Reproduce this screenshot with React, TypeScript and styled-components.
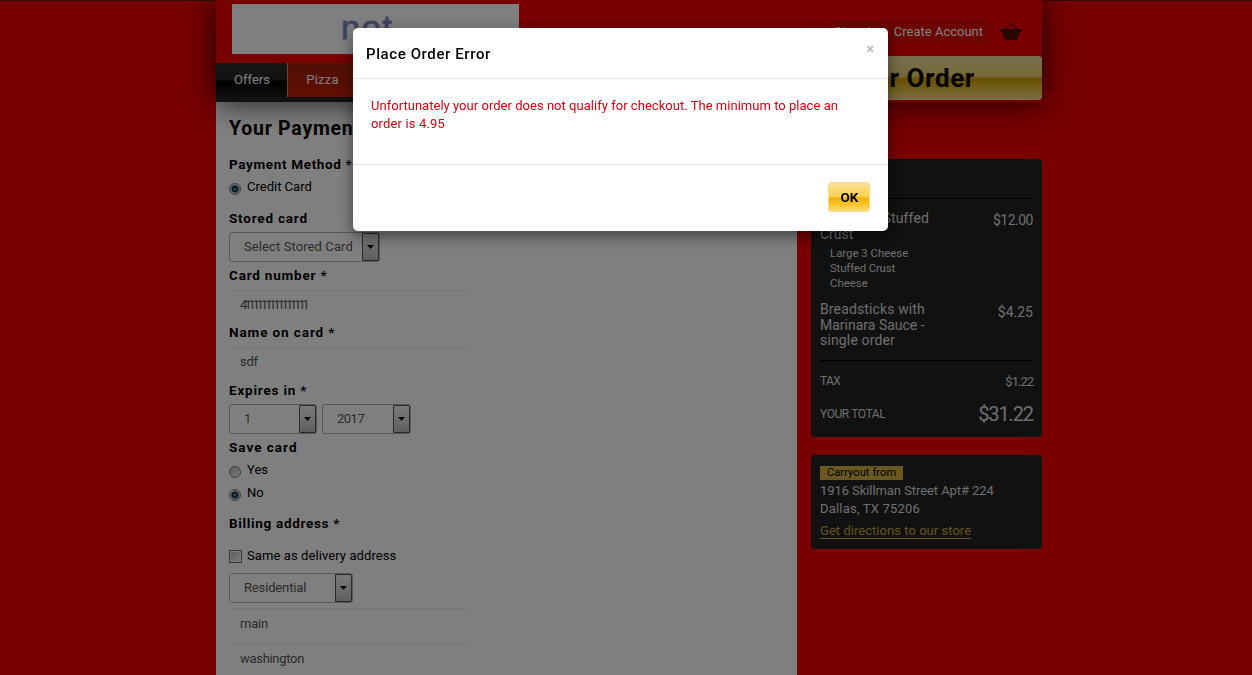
import React from "react";
import styled, { createGlobalStyle } from "styled-components";

const Global = createGlobalStyle`
  * { box-sizing: border-box; }
  html, body { margin: 0; height: 675px; overflow: hidden; background: #f00000; }
  body { font-family: Roboto, "Open Sans", sans-serif; font-size: 13px; color: #000; }
  h1, h2, p { margin: 0; }
`;

interface TextProps { $ls?: number; $size?: number }

const Text = styled.span<TextProps>`
  letter-spacing: ${(p) => p.$ls ?? 0}px;
  ${(p) => (p.$size ? `font-size: ${p.$size}px;` : "")}
  white-space: nowrap;
`;

const Page = styled.div`
  width: 826px;
  height: 675px;
  margin-left: 216px;
  display: flex;
  flex-direction: column;
`;

const TopEdge = styled.div`
  position: absolute;
  top: 0;
  left: 0;
  right: 0;
  height: 1px;
  background: #701414;
`;

const Header = styled.header`
  position: relative;
  z-index: 1;
  height: 102px;
  flex: none;
  display: flex;
  justify-content: space-between;
  background: #f00000;
  box-shadow: 0 0 30px rgba(0, 0, 0, 0.8);
`;

const Brand = styled.div`
  width: 581px;
  display: flex;
  flex-direction: column;
`;

const Logo = styled.div`
  width: 287px;
  height: 50px;
  margin: 4px 0 9px 16px;
  padding-left: 109px;
  background: #fff;
  overflow: hidden;
  color: #7d83c4;
  font: 34px/46px "Liberation Sans", sans-serif;
  letter-spacing: 1.8px;
  -webkit-text-stroke: 1px #8a8fc8;
`;

const Nav = styled.nav`
  height: 39px;
  display: flex;
  background: #b40000;
  border-bottom: 5px solid #222;
`;

const Tab = styled.a<{ $active?: boolean }>`
  width: ${(p) => (p.$active ? 72 : 69)}px;
  padding-left: 1px;
  line-height: 33px;
  text-align: center;
  color: #fff;
  background: ${(p) =>
    p.$active
      ? "linear-gradient(#2c2c2c 0, #262626 48%, #020202 54%, #1c1c1c 100%)"
      : "linear-gradient(#a02008, #c41c04)"};
  border-right: 1px solid ${(p) => (p.$active ? "#c98a80" : "transparent")};
`;

const Tools = styled.div`
  width: 231px;
  padding-top: 20px;
`;

const Account = styled.div`
  height: 36px;
  display: flex;
  justify-content: flex-end;
  padding-right: 20px;
  color: #fff;
`;

const AccountLink = styled.a<{ $gap: number }>`
  height: 23px;
  line-height: 23px;
  padding: 0 6px;
  margin-right: ${(p) => p.$gap}px;
  background: #d80a00;
  border-radius: 3px;
`;

const OrderButton = styled.div`
  height: 44px;
  padding-right: 67px;
  text-align: right;
  border-radius: 4px;
  font-weight: 700;
  line-height: 44px;
  white-space: nowrap;
  background: linear-gradient(#f0e0a0, #ecd070 46%, #d09c00 52%, #e4bc3c 75%, #f0dc90);
`;

const Columns = styled.div`
  flex: 1;
  display: flex;
  gap: 14px;
`;

const Main = styled.main`
  width: 581px;
  padding-left: 13px;
  background: #fff;
`;

const Heading = styled.h1`
  height: 51px;
  padding-top: 15px;
  font-size: 19.5px;
  line-height: 24px;
`;

const Label = styled.div<{ $top?: number; $bottom?: number }>`
  height: 22px;
  line-height: 22px;
  margin-top: ${(p) => p.$top ?? 2}px;
  margin-bottom: ${(p) => p.$bottom ?? 3}px;
  font-size: 13.5px;
  font-weight: 700;
`;

const Choice = styled.div`
  display: flex;
  height: 23px;
  line-height: 22px;
  gap: 6px;
`;

const Radio = styled.i<{ $on?: boolean }>`
  width: 12px;
  height: 12px;
  margin-top: 7px;
  border: 1px solid #777;
  border-radius: 50%;
  background: ${(p) =>
    p.$on
      ? "radial-gradient(circle at 50% 50%, #93b4c4 0, #28566e 1.5px, #122c3c 3.2px, #d0dce2 4px)"
      : "linear-gradient(135deg, #bbb, #f4f4f4)"};
`;

const Check = styled.i`
  width: 13px;
  height: 13px;
  margin-top: 5px;
  margin-right: -1px;
  border: 1px solid #707070;
  background: linear-gradient(135deg, #b8b8b8, #f6f6f6);
  box-shadow: inset 0 0 0 1px #f4f4f4;
`;

const SelectRow = styled.div<{ $top?: number }>`
  display: flex;
  gap: 5px;
  height: 30px;
  margin-top: ${(p) => p.$top ?? 0}px;
`;

const SelectBox = styled.div<{ $w: number }>`
  display: flex;
  justify-content: space-between;
  width: ${(p) => p.$w}px;
  padding-left: 14px;
  line-height: 27px;
  color: #555;
  border: 1px solid #b0b0b0;
  border-radius: 3px;
`;

const Arrow = styled.span`
  display: flex;
  align-items: center;
  justify-content: center;
  width: 17px;
  border: 1px solid #555;
  border-radius: 1px;
  background: linear-gradient(#f0f0f0, #ddd 48%, #bcbcbc);
`;

const Field = styled.div<{ $h: number; $top?: number; $line?: number }>`
  width: 241px;
  height: ${(p) => p.$h}px;
  line-height: ${(p) => p.$line ?? 29}px;
  margin-top: ${(p) => p.$top ?? 0}px;
  padding-left: 11px;
  color: #555;
  border-top: 1px solid #eee;
`;

const Aside = styled.aside`
  width: 231px;
  padding-top: 57px;
`;

const Card = styled.section<{ $h: number; $top?: number }>`
  height: ${(p) => p.$h}px;
  margin-bottom: 18px;
  padding: ${(p) => p.$top ?? 0}px 9px 0;
  border-radius: 4px;
  background: #222;
  color: #ddd;
`;

const CardTop = styled.div`
  height: 40px;
  border-bottom: 1px solid #000;
`;

const Item = styled.div<{ $top: number; $h: number }>`
  display: flex;
  justify-content: space-between;
  margin-top: ${(p) => p.$top}px;
  height: ${(p) => p.$h}px;
  font-size: 14px;
  line-height: 15.5px;
`;

const Price = styled.span<{ $drop?: number }>`
  padding-top: ${(p) => p.$drop ?? 2}px;
`;

const Toppings = styled.div`
  padding: 2px 0 0 10px;
  height: 56px;
  font-size: 11.4px;
  line-height: 15px;
`;

const Sum = styled.div<{ $h: number }>`
  display: flex;
  align-items: center;
  justify-content: space-between;
  height: ${(p) => p.$h}px;
`;

const Rule = styled.div`
  height: 1px;
  margin-bottom: 5px;
  background: #000;
`;

const Badge = styled.div`
  width: 83px;
  height: 14px;
  line-height: 14px;
  padding-left: 7px;
  color: #000;
  background: #d4b040;
  font-size: 11px;
`;

const Address = styled.p`
  padding-top: 2px;
  line-height: 18px;
`;

const Directions = styled.a`
  display: inline-block;
  margin-top: 6px;
  line-height: 14px;
  color: #c8a840;
  border-bottom: 1px solid #c8a840;
`;

const Overlay = styled.div`
  position: fixed;
  inset: 0;
  z-index: 5;
  background: rgba(0, 0, 0, 0.5);
`;

const Dialog = styled.div`
  width: 535px;
  height: 203px;
  margin: 28px 0 0 353px;
  background: #fff;
  border-radius: 5px;
  box-shadow: 0 5px 15px rgba(0, 0, 0, 0.5);
`;

const DialogHead = styled.div`
  display: flex;
  justify-content: space-between;
  height: 51px;
  padding: 0 14px 0 13px;
  border-bottom: 1px solid #e5e5e5;
`;

const DialogTitle = styled.h2`
  font-size: 15px;
  font-weight: 500;
  line-height: 52px;
`;

const Close = styled.span`
  padding-top: 11px;
  color: #bdbdbd;
  font-size: 14px;
  font-weight: 900;
  line-height: 20px;
`;

const DialogBody = styled.div`
  height: 85px;
  padding: 18px 18px 0;
  line-height: 18px;
  color: #d4000f;
`;

const DialogFoot = styled.div`
  display: flex;
  justify-content: flex-end;
  padding: 18px 18px 0;
  border-top: 1px solid #e5e5e5;
`;

const OkButton = styled.button`
  width: 42px;
  height: 30px;
  margin-top: -1px;
  padding: 1px 0 0 1px;
  border: 1px solid #fbdc8c;
  border-radius: 3px;
  font: 700 13.5px/27px Roboto, sans-serif;
  color: #000;
  background: linear-gradient(#fde49a, #fbd050 48%, #f2b010 54%, #fcc62c 78%, #fddc7c);
`;

const Basket = () => (
  <svg width="22" height="20" viewBox="0 0 22 20">
    <path d="M5 9 11 3.5 17 9" fill="none" stroke="#6a0c06" strokeWidth="1.3" />
    <path d="M0 9h22v3h-2l-3 8H5L2 12H0z" fill="#4a0c06" />
  </svg>
);

interface SelectProps { value: string; width: number; ls?: number }

const Select = ({ value, width, ls }: SelectProps) => (
  <SelectBox $w={width}>
    <Text $ls={ls}>{value}</Text>
    <Arrow>
      <svg width="7" height="4" viewBox="0 0 7 4"><path d="M0 0h7L3.5 4z" /></svg>
    </Arrow>
  </SelectBox>
);

export default function App() {
  return (
    <>
      <Global />
      <Page>
        <Header>
          <Brand>
            <Logo>not</Logo>
            <Nav>
              <Tab $active><Text>Offers</Text></Tab>
              <Tab><Text $ls={0.2}>Pizza</Text></Tab>
            </Nav>
          </Brand>
          <Tools>
            <Account>
              <AccountLink $gap={2}><Text $ls={0.9}>Sign In</Text></AccountLink>
              <AccountLink $gap={11}><Text>Create Account</Text></AccountLink>
              <Basket />
            </Account>
            <OrderButton><Text $size={26} $ls={0.6}>Your Order</Text></OrderButton>
          </Tools>
        </Header>
        <Columns>
          <Main>
            <Heading><Text $ls={0.75}>Your Payment</Text></Heading>
            <Label $top={0} $bottom={1}><Text $ls={0.65}>Payment Method *</Text></Label>
            <Choice><Radio $on /><Text>Credit Card</Text></Choice>
            <Label $top={8}><Text $ls={0.8}>Stored card</Text></Label>
            <SelectRow><Select value="Select Stored Card" width={151} ls={0.1} /></SelectRow>
            <Label $bottom={4}><Text $ls={0.8}>Card number *</Text></Label>
            <Field $h={29} $line={27}><Text $ls={-3.15}>4111111111111111</Text></Field>
            <Label $bottom={4}><Text $ls={0.9}>Name on card *</Text></Label>
            <Field $h={29} $line={27}><Text $ls={-0.3}>sdf</Text></Field>
            <Label $top={3}><Text $ls={0.8}>Expires in *</Text></Label>
            <SelectRow>
              <Select value="1" width={88} />
              <Select value="2017" width={89} ls={-0.5} />
            </SelectRow>
            <Label $bottom={1}><Text $ls={1}>Save card</Text></Label>
            <Choice><Radio /><Text>Yes</Text></Choice>
            <Choice><Radio $on /><Text>No</Text></Choice>
            <Label $top={7} $bottom={11}><Text $ls={0.68}>Billing address *</Text></Label>
            <Choice><Check /><Text $ls={0.09}>Same as delivery address</Text></Choice>
            <SelectRow $top={5}><Select value="Residential" width={124} ls={-0.15} /></SelectRow>
            <Field $h={30} $top={5}><Text $ls={-0.2}>main</Text></Field>
            <Field $h={30} $top={5}><Text $ls={-0.3}>washington</Text></Field>
          </Main>
          <Aside>
            <Card $h={278}>
              <CardTop />
              <Item $top={12} $h={33}>
                <span><Text $ls={0.15}>3 Cheese Stuffed</Text><br /><Text>Crust</Text></span>
                <Price><Text $ls={-0.5}>$12.00</Text></Price>
              </Item>
              <Toppings>
                <Text>Large 3 Cheese</Text><br />
                <Text $ls={-0.15}>Stuffed Crust</Text><br />
                <Text>Cheese</Text>
              </Toppings>
              <Item $top={2} $h={58}>
                <span>
                  <Text $ls={0.13}>Breadsticks with</Text><br />
                  <Text>Marinara Sauce -</Text><br />
                  <Text $ls={0.15}>single order</Text>
                </span>
                <Price $drop={3}><Text>$4.25</Text></Price>
              </Item>
              <Rule />
              <Sum $h={30}><Text $size={12} $ls={-0.6}>TAX</Text><Text $ls={-1}>$1.22</Text></Sum>
              <Sum $h={36}><Text $size={12} $ls={-0.4}>YOUR TOTAL</Text><Text $size={20} $ls={-1.1}>$31.22</Text></Sum>
            </Card>
            <Card $h={94} $top={11}>
              <Badge><Text $ls={0.1}>Carryout from</Text></Badge>
              <Address>
                <Text $ls={-0.07}>1916 Skillman Street Apt# 224</Text><br />
                <Text $ls={0.2}>Dallas, TX 75206</Text>
              </Address>
              <Directions><Text $ls={0.04}>Get directions to our store</Text></Directions>
            </Card>
          </Aside>
        </Columns>
      </Page>
      <TopEdge />
      <Overlay>
        <Dialog>
          <DialogHead>
            <DialogTitle><Text $ls={0.6}>Place Order Error</Text></DialogTitle>
            <Close>×</Close>
          </DialogHead>
          <DialogBody>
            <Text $ls={0.03}>Unfortunately your order does not qualify for checkout. The minimum to place an</Text><br />
            <Text $ls={0.15}>order is 4.95</Text>
          </DialogBody>
          <DialogFoot><OkButton>OK</OkButton></DialogFoot>
        </Dialog>
      </Overlay>
    </>
  );
}
